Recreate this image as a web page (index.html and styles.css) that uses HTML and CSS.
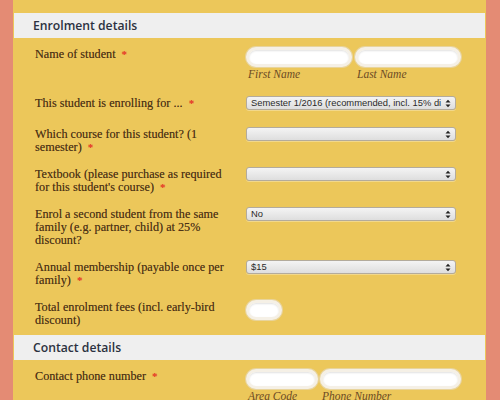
FILE: index.html
```html
<!DOCTYPE html>
<html>
<head>
<meta charset="utf-8">
<link rel="stylesheet" href="styles.css">
</head>
<body>
<div class="panel">
  <div class="section-head"><h2>Enrolment details</h2></div>
  <div class="rows">
    <div class="row row-name">
      <div class="label">Name of student <span class="req">*</span></div>
      <div class="control pair">
        <div class="field"><div class="pill w106"></div><div class="sub">First Name</div></div>
        <div class="field"><div class="pill w106"></div><div class="sub">Last Name</div></div>
      </div>
    </div>
    <div class="row r1">
      <div class="label">This student is enrolling for ... <span class="req">*</span></div>
      <div class="control"><div class="select"><span class="val">Semester 1/2016 (recommended, incl. 15% di</span><svg class="arr" width="6" height="9" viewBox="0 0 6 9"><path d="M0.5 3.5 L3 0.8 L5.5 3.5Z M0.5 5.5 L3 8.2 L5.5 5.5Z" fill="#222"/></svg></div></div>
    </div>
    <div class="row">
      <div class="label">Which course for this student? (1<br>semester) <span class="req">*</span></div>
      <div class="control"><div class="select"><span class="val"></span><svg class="arr" width="6" height="9" viewBox="0 0 6 9"><path d="M0.5 3.5 L3 0.8 L5.5 3.5Z M0.5 5.5 L3 8.2 L5.5 5.5Z" fill="#222"/></svg></div></div>
    </div>
    <div class="row">
      <div class="label">Textbook (please purchase as required<br>for this student's course) <span class="req">*</span></div>
      <div class="control"><div class="select"><span class="val"></span><svg class="arr" width="6" height="9" viewBox="0 0 6 9"><path d="M0.5 3.5 L3 0.8 L5.5 3.5Z M0.5 5.5 L3 8.2 L5.5 5.5Z" fill="#222"/></svg></div></div>
    </div>
    <div class="row">
      <div class="label">Enrol a second student from the same<br>family (e.g. partner, child) at 25%<br>discount?</div>
      <div class="control"><div class="select"><span class="val">No</span><svg class="arr" width="6" height="9" viewBox="0 0 6 9"><path d="M0.5 3.5 L3 0.8 L5.5 3.5Z M0.5 5.5 L3 8.2 L5.5 5.5Z" fill="#222"/></svg></div></div>
    </div>
    <div class="row">
      <div class="label">Annual membership (payable once per<br>family) <span class="req">*</span></div>
      <div class="control"><div class="select"><span class="val">$15</span><svg class="arr" width="6" height="9" viewBox="0 0 6 9"><path d="M0.5 3.5 L3 0.8 L5.5 3.5Z M0.5 5.5 L3 8.2 L5.5 5.5Z" fill="#222"/></svg></div></div>
    </div>
    <div class="row last">
      <div class="label">Total enrolment fees (incl. early-bird<br>discount)</div>
      <div class="control"><div class="pill w36"></div></div>
    </div>
  </div>
  <div class="section-head"><h2>Contact details</h2></div>
  <div class="rows">
    <div class="row row-name">
      <div class="label">Contact phone number <span class="req">*</span></div>
      <div class="control pair tight">
        <div class="field"><div class="pill w72"></div><div class="sub">Area Code</div></div>
        <div class="field"><div class="pill w141"></div><div class="sub">Phone Number</div></div>
      </div>
    </div>
  </div>
</div>
</body>
</html>
```
FILE: styles.css
```css
html, body {
  margin: 0;
  padding: 0;
  background: #e48b74;
  height: 100%;
  overflow: hidden;
}
.panel {
  margin-left: 13px;
  width: 473px;
  background: #ecc75a;
  padding-top: 13px;
  min-height: 400px;
}
.section-head {
  margin: 0 1px;
  height: 25px;
  background: #efefef;
  display: flex;
  align-items: center;
  padding-left: 19px;
}
.section-head h2 {
  margin: 0;
  font-family: "Open Sans", sans-serif;
  font-weight: 600;
  font-size: 12.2px;
  color: #2b3140;
}
.rows {
  padding: 9px 0 0 22px;
}
.row {
  display: grid;
  grid-template-columns: 211px 1fr;
  padding-bottom: 13px;
}
.row.r1 { padding-bottom: 17px; }
.row.last { padding-bottom: 8px; }
.row-name { padding-bottom: 15px; }
.label {
  font-family: "Liberation Serif", serif;
  font-size: 12.2px;
  line-height: 13px;
  color: #4d3316;
  text-shadow: 0 0 0.4px rgba(77,51,22,0.6);
  max-width: 205px;
  white-space: nowrap;
  padding-top: 1px;
}
.req {
  color: #e53224;
  font-weight: bold;
  font-size: 11px;
  line-height: 0;
  margin-left: 3px;
  text-shadow: none;
}
.control {
  display: flex;
}
.pair { gap: 3px; }
.pair.tight { gap: 2px; }
.field { display: flex; flex-direction: column; }
.pill {
  box-sizing: border-box;
  height: 20px;
  background: #fff;
  border: 3px solid #f5f0e6;
  border-radius: 10px;
  box-shadow: inset 0 1px 2px rgba(0,0,0,0.12), 0 0 0 1px rgba(230,220,200,0.6);
}
.w106 { width: 106px; }
.w36 { width: 36px; }
.w72 { width: 72px; }
.w141 { width: 141px; }
.sub {
  font-family: "Liberation Serif", serif;
  font-style: italic;
  font-size: 11.5px;
  line-height: 13px;
  color: #6b4a24;
  padding: 1px 0 0 2px;
}
.select {
  box-sizing: border-box;
  width: 210px;
  height: 14px;
  border: 1px solid #b3ab9c;
  border-radius: 3px;
  background: linear-gradient(#f4f4f4, #dedede);
  display: flex;
  align-items: center;
  padding: 0 4px 0 4px;
  box-shadow: 0 1px 0 rgba(255,255,255,0.3);
}
.val {
  flex: 1;
  overflow: hidden;
  white-space: nowrap;
  font-family: "Liberation Sans", sans-serif;
  font-size: 9.4px;
  color: #2a2a2a;
  line-height: 12px;
}
.arr { flex: none; margin-left: 3px; }
```
